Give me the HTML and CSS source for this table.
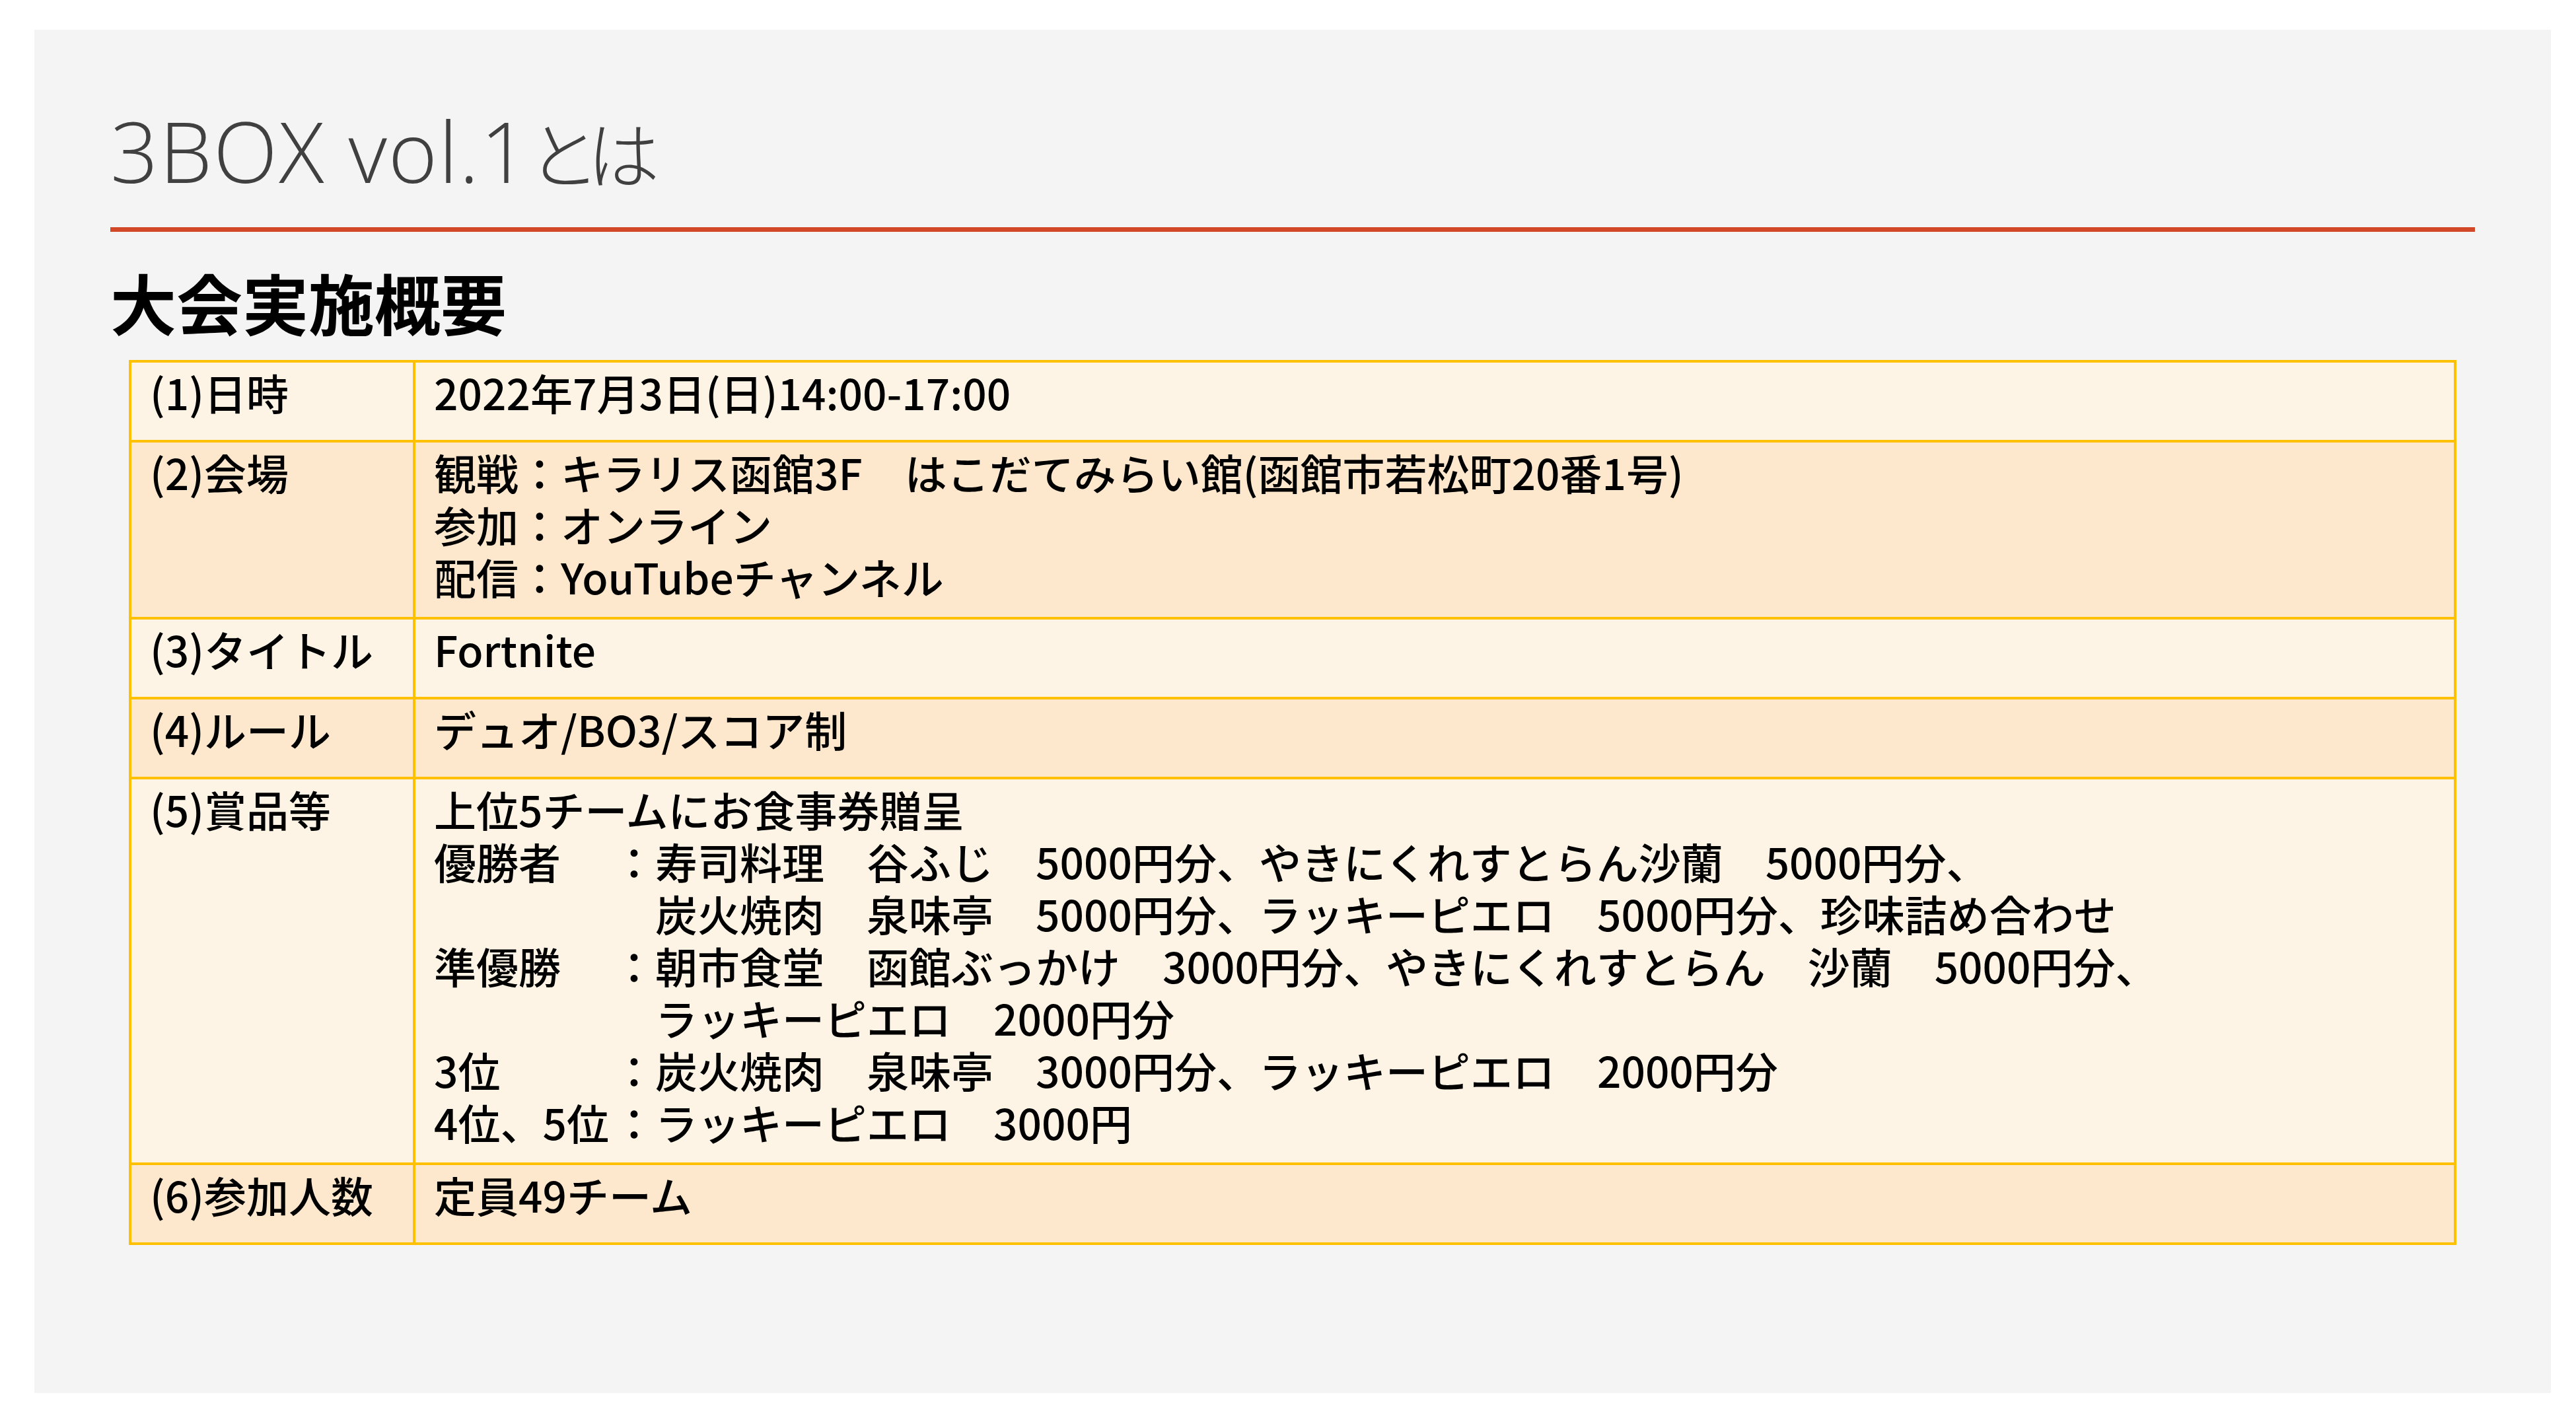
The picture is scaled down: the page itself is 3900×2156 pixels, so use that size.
FILE: index.html
```html
<!DOCTYPE html>
<html lang="ja">
<head>
<meta charset="utf-8">
<title>3BOX vol.1とは</title>
<link rel="stylesheet" href="styles.css">
</head>
<body>
<div class="slide">
  <h1 class="title"><span class="title-latin">3BOX vol.1</span><span class="title-kana">とは</span></h1>
  <div class="rule"></div>
  <h2 class="heading">大会実施概要</h2>
  <div class="table">
    <div class="cell label odd">(1)日時</div>
    <div class="cell value odd">2022年7月3日(日)14:00-17:00</div>

    <div class="cell label even">(2)会場</div>
    <div class="cell value even">
      <div>観戦：キラリス函館3F　はこだてみらい館(函館市若松町20番1号)</div>
      <div>参加：オンライン</div>
      <div>配信：YouTubeチャンネル</div>
    </div>

    <div class="cell label odd">(3)タイトル</div>
    <div class="cell value odd">Fortnite</div>

    <div class="cell label even">(4)ルール</div>
    <div class="cell value even">デュオ/BO3/スコア制</div>

    <div class="cell label odd">(5)賞品等</div>
    <div class="cell value odd">
      <div>上位5チームにお食事券贈呈</div>
      <div class="prizes">
        <div class="rank">優勝者</div>
        <div class="colon">：</div>
        <div class="items">
          <div>寿司料理　谷ふじ　5000円分、やきにくれすとらん沙蘭　5000円分、</div>
          <div>炭火焼肉　泉味亭　5000円分、ラッキーピエロ　5000円分、珍味詰め合わせ</div>
        </div>
        <div class="rank">準優勝</div>
        <div class="colon">：</div>
        <div class="items">
          <div>朝市食堂　函館ぶっかけ　3000円分、やきにくれすとらん　沙蘭　5000円分、</div>
          <div>ラッキーピエロ　2000円分</div>
        </div>
        <div class="rank">3位</div>
        <div class="colon">：</div>
        <div class="items">
          <div>炭火焼肉　泉味亭　3000円分、ラッキーピエロ　2000円分</div>
        </div>
        <div class="rank">4位、5位</div>
        <div class="colon">：</div>
        <div class="items">
          <div>ラッキーピエロ　3000円</div>
        </div>
      </div>
    </div>

    <div class="cell label even">(6)参加人数</div>
    <div class="cell value even">定員49チーム</div>
  </div>
</div>
</body>
</html>
```

FILE: styles.css
```css
* {
  box-sizing: border-box;
}

html, body {
  margin: 0;
  padding: 0;
  background: #ffffff;
}

.slide {
  width: 3810px;
  height: 2064px;
  margin: 45px 0 0 52px;
  padding: 108px 115px 0 115px;
  background: #f4f4f4;
  font-family: "Noto Sans CJK JP", sans-serif;
}

.title {
  height: 150px;
  margin: 0;
  font-family: "Open Sans", "Noto Sans CJK JP", sans-serif;
  font-weight: 300;
  font-size: 127px;
  line-height: 150px;
  color: #404040;
  white-space: nowrap;
}

.title-latin {
  letter-spacing: 2px;
}

.title-kana {
  font-family: "Noto Sans CJK JP", sans-serif;
  font-weight: 300;
  font-size: 110px;
  font-feature-settings: "palt" 1;
  letter-spacing: -10px;
  line-height: 100px;
}

.rule {
  height: 7px;
  margin-top: 41px;
  background: #d24726;
}

.heading {
  margin: 46px 0 0 0;
  font-family: "Noto Sans CJK JP", sans-serif;
  font-weight: 700;
  font-size: 100px;
  line-height: 120px;
  color: #000000;
}

.table {
  margin: 28px 28px 0 28px;
  display: grid;
  grid-template-columns: 426px 1fr;
  grid-auto-rows: minmax(117px, auto);
  gap: 4px;
  padding: 4px;
  background: #ffc000;
}

.cell {
  padding: 5px 28px 22px 28px;
  font-size: 64px;
  line-height: 79px;
  font-weight: 500;
  color: #000000;
  white-space: nowrap;
}

.odd {
  background: #fdf4e6;
}

.even {
  background: #fee8cd;
}

.prizes {
  display: grid;
  grid-template-columns: 271px 64px 1fr;
}
```
